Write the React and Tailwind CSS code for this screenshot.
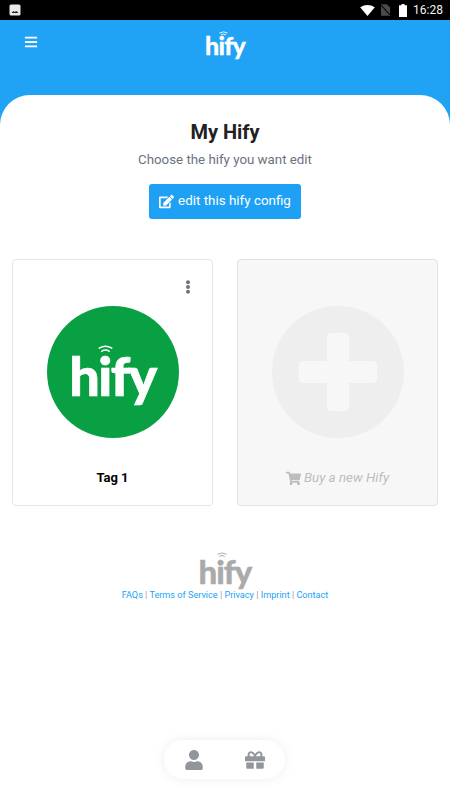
import React from 'react'
import { FaBars, FaEdit, FaEllipsisV, FaGift, FaShoppingCart, FaUser } from 'react-icons/fa'

const HifyLogo = ({ color, size, waveWidth, waveTop, waveLeft }) => (
    <div
        className="relative inline-block leading-none font-['Lato',sans-serif] font-black tracking-[-0.03em]"
        style={{ color, fontSize: size, WebkitTextStroke: `${size * 0.012}px ${color}` }}
    >
        <span>hify</span>
        <svg
            className="absolute"
            style={{ top: waveTop, left: waveLeft, width: waveWidth }}
            viewBox="0 0 24 14"
            fill="none"
            stroke={color}
            strokeWidth="2.4"
            strokeLinecap="round"
        >
            <path d="M2 5 Q12 -1 22 5" />
            <path d="M6 10 Q12 6 18 10" />
        </svg>
    </div>
)

const StatusBar = () => (
    <div className="h-5 bg-black flex items-center justify-between pl-[9px] pr-[7px] shrink-0">
        <svg width="12" height="12" viewBox="0 0 12 12">
            <rect x="0.5" y="0.5" width="11" height="11" rx="1.5" fill="#e8e8e8" />
            <path d="M2.5 9 L4.5 7 L5.5 8 L7.5 7 L9.5 9 Z" fill="#222" />
        </svg>
        <div className="flex items-center">
            <svg width="15" height="11" viewBox="0 0 16 12" className="mr-[6px]">
                <path d="M0 2.5 Q8 -2.5 16 2.5 L8 12 Z" fill="#fff" />
            </svg>
            <svg width="9" height="12" viewBox="0 0 10 13" className="mr-[9px]">
                <path d="M0 0 H6.5 L10 3.5 V13 H0 Z" fill="#4a4a4a" />
                <path d="M0 1 L10 12" stroke="#000" strokeWidth="1.2" />
            </svg>
            <svg width="8" height="13" viewBox="0 0 8 13" className="mr-[6px]">
                <path d="M2.5 0 H5.5 V1.2 H8 V13 H0 V1.2 H2.5 Z" fill="#fff" />
            </svg>
            <span className="text-[12px] font-['Roboto',sans-serif] text-[#f2f2f2] leading-none">16:28</span>
        </div>
    </div>
)

const App = () => {
    return (
        <div className="relative h-[800px] w-full overflow-hidden bg-[#20a3f5] flex flex-col font-['Roboto',sans-serif]">
            <StatusBar />

            <div className="h-[75px] relative shrink-0 flex justify-center pt-[13px]">
                <FaBars className="absolute left-6 top-[15px] text-white text-[14px]" />
                <HifyLogo color="#fff" size={25} waveWidth="9px" waveTop="-2px" waveLeft="14px" />
            </div>

            <div className="flex-1 bg-white rounded-t-[30px] flex flex-col items-center relative">
                <h1 className="mt-[25px] text-[20px] leading-6 font-bold text-[#222]">My Hify</h1>
                <p className="mt-[6px] text-[13.3px] leading-5 text-[#6b7280]">Choose the hify you want edit</p>
                <button className="mt-[14px] h-[35px] w-[152px] bg-[#1ea1f5] rounded-[3px] text-white text-[13.4px] flex items-center justify-center gap-1">
                    <FaEdit className="text-[15px]" />
                    edit this hify config
                </button>

                <div className="mt-10 w-full px-3 grid grid-cols-2 gap-6">
                    <div className="relative h-[247px] bg-white border border-[#e5e5e5] rounded-[4px] flex flex-col items-center pt-[46px]">
                        <FaEllipsisV className="absolute right-[17px] top-[20px] text-[#6b7280] text-[14px]" />
                        <div className="w-[132px] h-[132px] rounded-full bg-[#09a043] flex items-center justify-center pt-2">
                            <HifyLogo color="#fff" size={54} waveWidth="15px" waveTop="-4px" waveLeft="29px" />
                        </div>
                        <div className="mt-[32px] text-[13px] leading-4 font-bold text-black">Tag 1</div>
                    </div>

                    <div className="h-[247px] bg-[#f7f7f7] border border-[#e2e2e2] rounded-[4px] flex flex-col items-center pt-[46px]">
                        <div className="relative w-[132px] h-[132px] rounded-full bg-[#eeeeee]">
                            <div className="absolute left-[55px] top-[27px] w-[22px] h-[78px] rounded-[4px] bg-[#f7f7f7]" />
                            <div className="absolute left-[27px] top-[55px] w-[78px] h-[22px] rounded-[4px] bg-[#f7f7f7]" />
                        </div>
                        <div className="mt-[32px] text-[13.4px] leading-4 italic text-[#bdbdbd] flex items-center gap-[3px]">
                            <FaShoppingCart className="text-[15px]" />
                            Buy a new Hify
                        </div>
                    </div>
                </div>

                <div className="mt-[49px] flex flex-col items-center">
                    <HifyLogo color="#aaaaaa" size={33} waveWidth="10px" waveTop="-3px" waveLeft="18px" />
                    <div className="text-[9.15px] leading-3 text-[#9a9a9a] mt-[1px]">
                        <span className="text-[#20a3f5]">FAQs</span> | <span className="text-[#20a3f5]">Terms of Service</span> | <span className="text-[#20a3f5]">Privacy</span> | <span className="text-[#20a3f5]">Imprint</span> | <span className="text-[#20a3f5]">Contact</span>
                    </div>
                </div>

                <div className="absolute bottom-[21px] left-[164px] w-[121px] h-[39px] bg-white rounded-full shadow-[0_0_12px_rgba(0,0,0,0.07)] flex items-center justify-between px-5 text-[#92969b]">
                    <FaUser className="text-[20px]" />
                    <FaGift className="text-[20px]" />
                </div>
            </div>
        </div>
    )
}

export default App
